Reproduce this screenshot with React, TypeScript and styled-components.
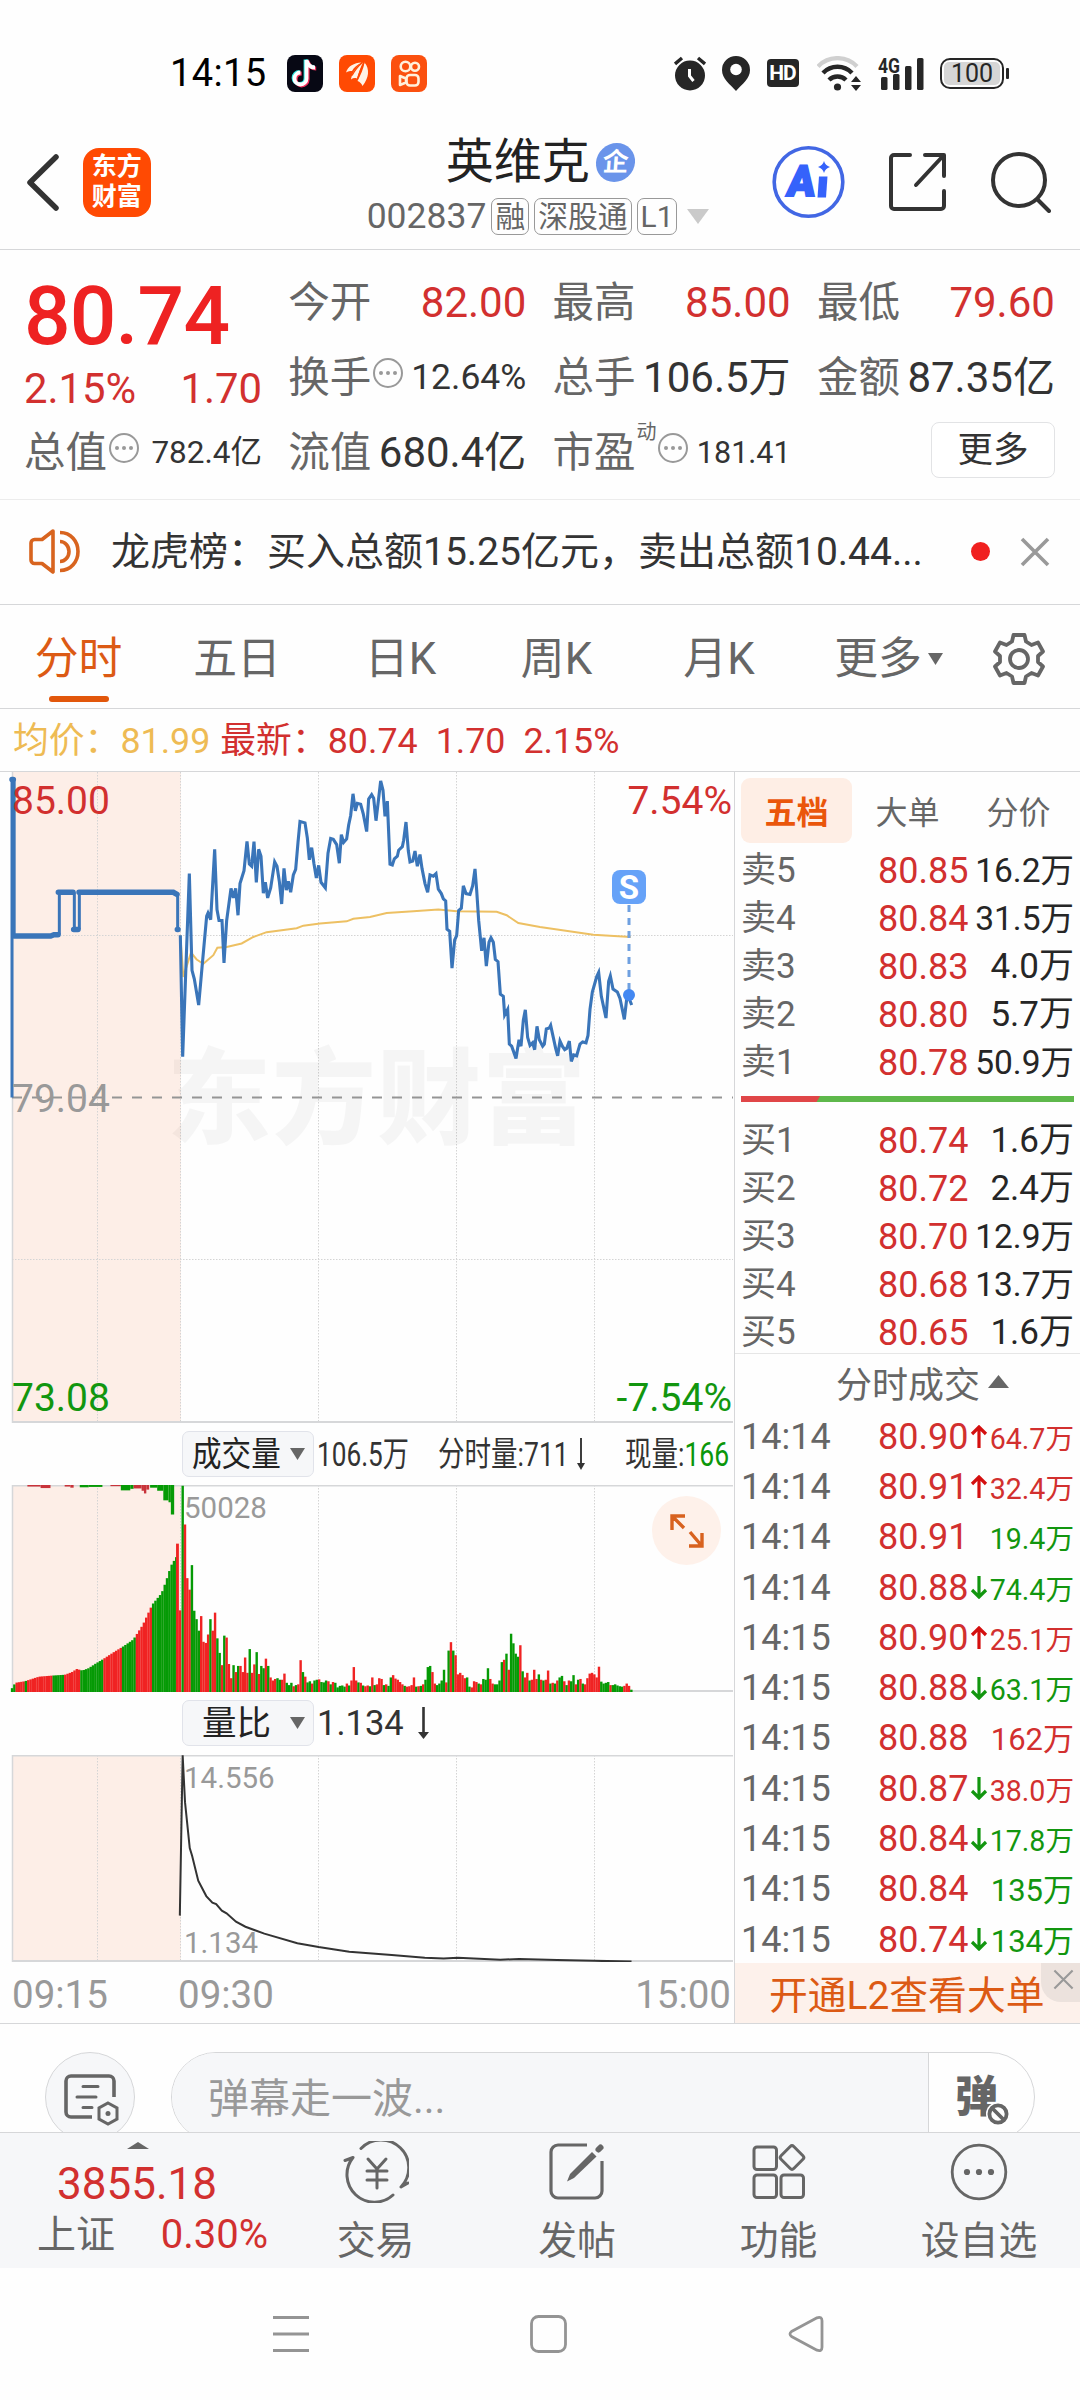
import React from "react";
import styled, { createGlobalStyle, css } from "styled-components";

const RED = "#d2302f";
const GREEN = "#12960f";
const GREY = "#666666";
const INK = "#333333";
const ORANGE = "#dc5a14";
const LINE = "#d6d7d9";
const PALE = "#f6f7f9";
const PINK = "#fdeee7";

const Global = createGlobalStyle`
  * { box-sizing: border-box; }
  html, body { margin: 0; padding: 0; background: #fff; }
  body { font-family: Roboto, "Noto Sans CJK SC", sans-serif; color: ${INK}; }
  svg { display: block; flex: none; }
`;

const Screen = styled.div`
  width: 1080px;
  height: 2400px;
  background: #fefefe;
  overflow: hidden;
  display: flex;
  flex-direction: column;
`;

/* ---------- status bar ---------- */

const StatusBar = styled.div`
  flex: none;
  height: 110px;
  padding: 36px 76px 0 170px;
  display: flex;
  align-items: center;
  justify-content: space-between;
`;

const StatusSide = styled.div<{ $gap: number }>`
  display: flex;
  align-items: center;
  gap: ${(p) => p.$gap}px;
`;

const Clock = styled.span`
  font-size: 38px;
  line-height: 44px;
  color: #000;
  width: 101px;
  letter-spacing: 0.4px;
`;

const HdBadge = styled.span`
  width: 32px;
  height: 28px;
  margin-right: 2px;
  border-radius: 4px;
  background: #262626;
  color: #fff;
  font-size: 21px;
  font-weight: 700;
  line-height: 29px;
  text-align: center;
  letter-spacing: -1px;
`;

const Battery = styled.span`
  position: relative;
  width: 64px;
  height: 31px;
  border: 2.5px solid #262626;
  border-radius: 10px;
  padding: 2px;

  &::after {
    content: "";
    position: absolute;
    right: -7px;
    top: 8px;
    width: 3px;
    height: 11px;
    border-radius: 1px;
    background: #262626;
  }
`;

const BatteryFill = styled.span`
  display: block;
  height: 100%;
  border-radius: 5px;
  background: #d6d6d6;
  color: #262626;
  font-size: 25px;
  line-height: 23px;
  text-align: center;
`;

/* ---------- header ---------- */

const Header = styled.header`
  flex: none;
  height: 140px;
  padding: 5px 29px 0 25px;
  border-bottom: 1.5px solid ${LINE};
  display: flex;
  align-items: center;
`;

const Brand = styled.div`
  width: 68px;
  height: 69px;
  margin-left: 23px;
  border-radius: 16px;
  background: #ff4a03;
  color: #fff;
  font-size: 25px;
  font-weight: 700;
  line-height: 30px;
  text-align: center;
  padding-top: 4px;
`;

const TitleBlock = styled.div`
  align-self: flex-start;
  width: 345px;
  margin: 20px 0 0 216px;
`;

const TitleRow = styled.div`
  display: flex;
  height: 54px;
  align-items: center;
  justify-content: center;
  gap: 6px;
  padding-left: 4px;
`;

const Title = styled.h1`
  margin: 0;
  font-size: 48px;
  font-weight: 400;
  line-height: 54px;
  color: #222;
`;

const FirmBadge = styled.span`
  width: 39px;
  height: 39px;
  border-radius: 50%;
  background: #6a94ea;
  color: #fff;
  font-size: 26px;
  font-weight: 700;
  line-height: 38px;
  text-align: center;
  transform: skewX(-4deg);
`;

const CodeRow = styled.div`
  display: flex;
  height: 44px;
  margin-top: 5px;
  align-items: center;
  gap: 5px;
`;

const Code = styled.span`
  font-size: 35.5px;
  line-height: 44px;
  color: ${GREY};
`;

const CodeTag = styled.span`
  height: 37px;
  padding: 0 3px;
  border: 1.5px solid #999;
  border-radius: 7px;
  font-size: 29.8px;
  line-height: 36px;
  color: ${GREY};
  white-space: nowrap;
`;

const HeaderIcons = styled.div`
  display: flex;
  align-items: center;
  margin-left: 62px;
  gap: 43px;
`;

/* ---------- quote ---------- */

const Quote = styled.section`
  flex: none;
  height: 250px;
  padding: 14.5px 25px 0 24px;
  border-bottom: 1.5px solid #ececec;
  display: grid;
  grid-template-columns: repeat(4, 238px);
  grid-template-rows: repeat(3, 75px);
  column-gap: 26.3px;
`;

const PriceCell = styled.div`
  grid-row: span 2;
  display: flex;
  flex-direction: column;
`;

const BigPrice = styled.span`
  height: 97px;
  padding-top: 2px;
  font-size: 82px;
  font-weight: 500;
  line-height: 98px;
  letter-spacing: -0.8px;
  color: #ee2222;
`;

const ChangeRow = styled.div`
  display: flex;
  justify-content: space-between;
  font-size: 41.8px;
  line-height: 54px;
  color: ${RED};
`;

const Cell = styled.div`
  display: flex;
  align-items: center;
  height: 75px;
  line-height: 75px;
  white-space: nowrap;
`;

const CellLabel = styled.span`
  font-size: 41.5px;
  color: ${GREY};
`;

const CellSup = styled.sup`
  font-size: 20px;
  line-height: 20px;
  color: ${GREY};
  align-self: flex-start;
  margin: 7px 0 0 1px;
`;

const CellValue = styled.span<{ $red?: boolean; $size?: number }>`
  margin-left: auto;
  font-size: ${(p) => p.$size ?? 42}px;
  color: ${(p) => (p.$red ? RED : INK)};
`;

const InfoDot = styled.span`
  width: 30px;
  height: 30px;
  margin: -9px 0 0 1.5px;
  border: 2.5px solid #999;
  border-radius: 50%;
  display: flex;
  align-items: center;
  justify-content: center;
  gap: 3px;

  i {
    width: 4px;
    height: 4px;
    border-radius: 50%;
    background: #999;
  }
`;

const MoreButton = styled.button`
  align-self: center;
  justify-self: end;
  width: 124px;
  height: 56px;
  margin-top: -5px;
  border: 1.5px solid #e2e3e5;
  border-radius: 8px;
  background: #fff;
  color: ${INK};
  font: 35.5px/54px Roboto, "Noto Sans CJK SC", sans-serif;
  padding: 0;
`;

/* ---------- news ---------- */

const News = styled.div`
  flex: none;
  height: 104.5px;
  border-bottom: 1.5px solid ${LINE};
  padding: 0 30px 0 29px;
  display: flex;
  align-items: center;
`;

const NewsText = styled.span`
  width: 830px;
  margin-left: 31px;
  font-size: 39px;
  line-height: 60px;
  white-space: nowrap;
`;

const RedDot = styled.span`
  width: 19px;
  height: 19px;
  margin: 0 30px 0 31px;
  border-radius: 50%;
  background: #f0201f;
`;

/* ---------- period tabs ---------- */

const Tabs = styled.nav`
  flex: none;
  height: 104px;
  padding-top: 4px;
  border-bottom: 1.5px solid ${LINE};
  display: grid;
  grid-template-columns: 157px 160px 167px 145px 180px 159px 102px;
`;

const Tab = styled.div<{ $active?: boolean }>`
  position: relative;
  display: flex;
  align-items: center;
  justify-content: center;
  gap: 6px;
  font-size: 43.8px;
  line-height: 101px;
  color: ${(p) => (p.$active ? ORANGE : GREY)};

  ${(p) =>
    p.$active &&
    css`
      &::after {
        content: "";
        position: absolute;
        left: 49px;
        bottom: 8px;
        width: 60px;
        height: 6px;
        border-radius: 3px;
        background: #e2570b;
      }
    `}
`;

const Averages = styled.div`
  flex: none;
  height: 63px;
  border-bottom: 1.5px solid ${LINE};
  padding: 1px 0 0 13px;
  display: flex;
  font-size: 35.8px;
  line-height: 63px;
  color: ${RED};
  white-space: nowrap;
`;

const AvgItem = styled.span<{ $gold?: boolean; $right: number }>`
  margin-right: ${(p) => p.$right}px;
  color: ${(p) => (p.$gold ? "#eebb54" : RED)};
`;

/* ---------- market body ---------- */

const Market = styled.main`
  flex: none;
  height: 1252px;
  border-bottom: 1.5px solid ${LINE};
  display: flex;
`;

const Charts = styled.section`
  width: 735px;
  border-right: 1.5px solid ${LINE};
`;

const Plot = styled.div<{ $h: number }>`
  position: relative;
  height: ${(p) => p.$h}px;
`;

const PlotLabel = styled.span<{
  $x?: number;
  $r?: number;
  $y: number;
  $color: string;
  $size: number;
}>`
  position: absolute;
  ${(p) => (p.$r !== undefined ? `right: ${p.$r}px;` : `left: ${p.$x}px;`)}
  top: ${(p) => p.$y - 20}px;
  font-size: ${(p) => p.$size}px;
  line-height: 40px;
  color: ${(p) => p.$color};
`;

const SellBadge = styled.span`
  position: absolute;
  left: 612px;
  top: 98px;
  width: 34px;
  height: 34px;
  border-radius: 8px;
  background: #66a2f8;
  color: #fff;
  font-size: 33px;
  font-weight: 700;
  line-height: 35px;
  text-align: center;
`;

const ExpandButton = styled.span`
  position: absolute;
  left: 652px;
  top: 11px;
  width: 69px;
  height: 69px;
  border-radius: 50%;
  background: #fef1ea;
  display: flex;
  align-items: center;
  justify-content: center;
`;

const Indicator = styled.div`
  height: 62.5px;
  padding-left: 182px;
  display: flex;
  align-items: center;
  font-size: 34px;
  line-height: 46px;
`;

const Select = styled.div`
  width: 132px;
  height: 46px;
  flex: none;
  padding-right: 8px;
  border: 1.5px solid #e1e3ea;
  border-radius: 7px;
  background: ${PALE};
  display: flex;
  align-items: center;
  justify-content: flex-end;
  color: #222;
`;

const Squeezed = styled.span<{ $w: number; $k: number; $ml?: number }>`
  width: ${(p) => p.$w}px;
  margin-left: ${(p) => p.$ml ?? 0}px;
  flex: none;
  white-space: nowrap;

  > span {
    display: inline-block;
    transform: scaleX(${(p) => p.$k});
    transform-origin: left center;
  }
  b {
    font-weight: 400;
    color: #0b970b;
  }
`;

const SelectName = styled.span`
  flex: none;
  width: 70px;
  margin-right: 18px;
  font-size: 34.5px;
  white-space: nowrap;
`;

const RatioValue = styled.span`
  margin: 0 14px 0 3px;
  font-size: 34.5px;
`;

const Axis = styled.div`
  height: 61px;
  padding: 4px 3px 0 12px;
  display: flex;
  font-size: 38.5px;
  line-height: 58px;
  color: #999;
`;

const AxisTime = styled.span<{ $w?: number }>`
  ${(p) => (p.$w ? `width: ${p.$w}px;` : "margin-left: auto;")}
`;

/* ---------- order book ---------- */

const Book = styled.aside`
  width: 345px;
  display: flex;
  flex-direction: column;
`;

const BookTabs = styled.div`
  height: 75px;
  flex: none;
  padding: 6.5px 0 0 6px;
  display: flex;
`;

const BookTab = styled.span<{ $active?: boolean }>`
  width: 111px;
  height: 65px;
  border-radius: 9px;
  text-align: center;
  font-size: 32px;
  line-height: 70px;
  color: ${(p) => (p.$active ? "#ea560b" : GREY)};
  font-weight: ${(p) => (p.$active ? 700 : 400)};
  background: ${(p) => (p.$active ? "#feeee5" : "transparent")};
`;

const OrderRow = styled.div`
  height: 48px;
  flex: none;
  padding: 0 6px 0 6px;
  display: grid;
  grid-template-columns: 137px 93px 1fr;
  line-height: 48px;
  font-size: 35px;
  color: ${GREY};
`;

const RowPrice = styled.span`
  font-size: 36px;
  color: ${RED};
`;

const OrderQty = styled.span<{ $long: boolean }>`
  justify-self: end;
  font-size: ${(p) => (p.$long ? 33.5 : 35)}px;
  color: #262626;
  white-space: nowrap;
`;

const RatioTrack = styled.div`
  flex: none;
  height: 6px;
  margin: 9px 6px 15px;
  background: linear-gradient(120deg, #e04648 0 68px, #5eb84b 69px);
`;

const TradesTitle = styled.div`
  flex: none;
  height: 59px;
  margin-top: -4px;
  border-top: 1.5px solid #e6e6e6;
  display: flex;
  align-items: center;
  justify-content: center;
  gap: 8px;
  padding: 0 4px 2px 34px;
  font-size: 36px;
  color: ${GREY};
`;

const TradeRow = styled.div`
  flex: none;
  height: 50.3px;
  padding: 0 6px 0 6px;
  display: grid;
  grid-template-columns: 137px 92px 18px minmax(0, 1fr);
  align-items: center;
  line-height: 50px;
  font-size: 36px;
  color: ${GREY};
  white-space: nowrap;
`;

const TradeQty = styled.span<{ $up: boolean; $long: boolean }>`
  justify-self: end;
  font-size: ${(p) => (p.$long ? 28.6 : 31)}px;
  line-height: 46px;
  color: ${(p) => (p.$up ? RED : GREEN)};
  padding-top: 4px;
`;

const Promo = styled.div`
  position: relative;
  flex: none;
  height: 60px;
  margin-top: -2px;
  background: #fdf1eb;
  color: ${ORANGE};
  font-size: 38.8px;
  line-height: 65px;
  padding-left: 34px;
  white-space: nowrap;
`;

const PromoClose = styled.span`
  position: absolute;
  right: 0;
  top: 0;
  width: 39px;
  height: 39px;
  border-bottom-left-radius: 20px;
  background: #ece2dd;
  padding: 6px 0 0 12px;
`;

/* ---------- bottom ---------- */

const Danmaku = styled.div`
  flex: none;
  height: 108px;
  padding: 28px 45px 0 45px;
  display: flex;
  overflow: hidden;
`;

const RoundButton = styled.span`
  flex: none;
  width: 90px;
  height: 90px;
  border: 1.5px solid ${LINE};
  border-radius: 50%;
  background: ${PALE};
  padding: 21px 0 0 18px;
`;

const InputPill = styled.div`
  flex: none;
  width: 864px;
  height: 90px;
  margin-left: 36px;
  border: 1.5px solid ${LINE};
  border-radius: 45px;
  display: flex;
  overflow: hidden;
`;

const InputText = styled.span`
  width: 757px;
  border-right: 1.5px solid ${LINE};
  background: ${PALE};
  padding-left: 36px;
  font-size: 41px;
  line-height: 92px;
  color: #999;
`;

const BulletToggle = styled.span`
  position: relative;
  padding-left: 26px;
  font-size: 43px;
  font-weight: 900;
  line-height: 88px;
  color: ${GREY};
`;

const BanMark = styled.span`
  position: absolute;
  left: 57px;
  top: 49px;
  border-radius: 50%;
  background: #fff;
`;

const Toolbar = styled.footer`
  flex: none;
  height: 136px;
  border-top: 1.5px solid ${LINE};
  background: ${PALE};
  display: grid;
  grid-template-columns: 275px 201px 202px 201px 200px;
`;

const IndexBox = styled.div`
  display: flex;
  flex-direction: column;
  color: ${RED};
  padding: 9px 0 0 37px;
`;

const IndexArrow = styled.span`
  width: 0;
  height: 0;
  margin-left: 90px;
  border: 11px solid transparent;
  border-bottom: 7px solid ${GREY};
  border-top: 0;
`;

const IndexValue = styled.span`
  margin: 9px 0 0 20px;
  font-size: 44px;
  line-height: 52px;
`;

const IndexChange = styled.span`
  display: flex;
  justify-content: space-between;
  width: 231px;
  font-size: 40px;
  line-height: 50px;

  em {
    font-style: normal;
    font-size: 39px;
    color: ${GREY};
  }
`;

const Tool = styled.div`
  display: flex;
  flex-direction: column;
  align-items: center;
  padding-top: 8px;
  font-size: 38.8px;
  line-height: 76px;
  color: ${GREY};
`;

const SystemNav = styled.div`
  flex: none;
  height: 132px;
  padding: 0 256px 0 273px;
  display: flex;
  align-items: center;
  justify-content: space-between;
`;

/* ---------- icons ---------- */

const NoteIcon = () => (
  <svg width="36" height="37" viewBox="0 0 36 37">
    <rect width="36" height="37" rx="8" fill="#070814" />
    <g fill="none" strokeWidth="3.8">
      <path d="M19.500 5v18.500a6 6 0 1 1-6-6M19.500 5c1 4.500 4 7.500 8.500 7.500" stroke="#2ee6e0" transform="translate(-1 -.6)" />
      <path d="M19.500 5v18.500a6 6 0 1 1-6-6M19.500 5c1 4.500 4 7.500 8.500 7.500" stroke="#f0305a" transform="translate(1.200 1)" />
      <path d="M19.500 5v18.500a6 6 0 1 1-6-6M19.500 5c1 4.500 4 7.500 8.500 7.500" stroke="#fff" />
    </g>
  </svg>
);

const WingIcon = () => (
  <svg width="36" height="37" viewBox="0 0 36 37">
    <rect width="36" height="37" rx="8" fill="#ff4a03" />
    <g fill="#fff3e6">
      <path d="M7 17.500C9 11 15 8 22.500 7.500c-5 2.500-7.500 5-9.500 8.500-2 0-4 .3-6 1.500z" />
      <path d="M12 24.500c1-7 5.500-13 12-17-2.500 5-4.500 10-6 16-2-.8-4-.5-6 1z" />
      <path d="M23.500 31c-1-2.500-2.500-4-5-5 3-6 6-12 7-18.500C31 14 30 23 23.500 31z" />
    </g>
    <path d="M23.500 7.500c-5 4-8 8.500-10.500 13M25 8c-3 5.500-5 11-6.500 16" stroke="#ff4a03" strokeWidth="1.300" fill="none" />
  </svg>
);

const CameraIcon = () => (
  <svg width="36" height="37" viewBox="0 0 36 37">
    <rect width="36" height="37" rx="8" fill="#fb500f" />
    <g fill="none" stroke="#fff0dc" strokeWidth="2.6">
      <circle cx="14.500" cy="11.500" r="4.800" />
      <circle cx="24" cy="11.800" r="4" />
      <rect x="15.500" y="20" width="12" height="10.500" rx="3.500" />
      <path d="M15 23.500l-6-2.500v9l6-2.500z" strokeLinejoin="round" />
    </g>
  </svg>
);

const AlarmIcon = () => (
  <svg width="32" height="35" viewBox="0 0 32 35">
    <circle cx="16" cy="19.500" r="15" fill="#262626" />
    <path d="M1 8l7-6M31 8l-7-6" stroke="#262626" strokeWidth="3.400" />
    <path d="M15.500 13v7l4 5" stroke="#fff" strokeWidth="3" fill="none" />
  </svg>
);

const PinIcon = () => (
  <svg width="28" height="35" viewBox="0 0 28 35">
    <path d="M14 0a14 14 0 0 0-14 14c0 9 8 14 14 21 6-7 14-12 14-21A14 14 0 0 0 14 0z" fill="#262626" />
    <circle cx="14" cy="13.500" r="5.800" fill="#fff" />
  </svg>
);

const WifiIcon = () => (
  <svg width="44" height="35" viewBox="0 0 44 35">
    <g fill="none" strokeWidth="4.400">
      <path d="M1 10.500a27 27 0 0 1 39 0" stroke="#d0d0d0" />
      <path d="M6 17a20 20 0 0 1 29 0M12 24a12 12 0 0 1 17 0" stroke="#262626" />
    </g>
    <circle cx="20.500" cy="31" r="3.600" fill="#262626" />
    <path d="M34 26l5-6 5 6zM34 29l5 6 5-6z" fill="#262626" />
  </svg>
);

const SignalIcon = () => (
  <svg width="46" height="36" viewBox="0 0 46 36">
    <text x="0" y="17.500" fontFamily="Roboto" fontWeight="700" fontSize="20" textLength="22" lengthAdjust="spacingAndGlyphs" fill="#262626">
      4G
    </text>
    <g fill="#262626">
      <rect x="3" y="22" width="6.500" height="13" rx="1.500" />
      <rect x="15" y="19" width="6.500" height="16" rx="1.500" />
      <rect x="27" y="11" width="6.500" height="24" rx="1.500" />
      <rect x="39" y="3" width="6.500" height="32" rx="1.500" />
    </g>
  </svg>
);

const BackIcon = () => (
  <svg width="35" height="60" viewBox="0 0 35 60">
    <path d="M31 5L5 30.500 31 56" fill="none" stroke="#333" strokeWidth="5.500" strokeLinecap="round" strokeLinejoin="round" />
  </svg>
);

const AiIcon = () => (
  <svg width="73" height="74" viewBox="0 0 73 74">
    <circle cx="36.500" cy="37" r="34.300" fill="#fff" stroke="#4267e4" strokeWidth="3.600" />
    <text x="14" y="51" fontFamily="Roboto" fontWeight="900" fontSize="43" fill="#3562fb" stroke="#3562fb" strokeWidth="2" textLength="28" lengthAdjust="spacingAndGlyphs" transform="translate(6 0) skewX(-7)">
      A
    </text>
    <path d="M47 31.500h8.500l-1.500 21h-8.500z" fill="#3562fb" />
    <path d="M52 16q1.200 4.500 6 6-4.800 1.500-6 6-1.200-4.500-6-6 4.800-1.500 6-6z" fill="#3562fb" />
  </svg>
);

const ShareIcon = () => (
  <svg width="60" height="60" viewBox="0 0 60 60" fill="none" stroke="#333" strokeWidth="4" strokeLinecap="round" strokeLinejoin="round">
    <path d="M22 3H6a3 3 0 0 0-3 3v48a3 3 0 0 0 3 3h47a3 3 0 0 0 3-3V39M37 3h19v21M55 4L28 33" />
  </svg>
);

const SearchIcon = () => (
  <svg width="60" height="62" viewBox="0 0 60 62" fill="none" stroke="#333" strokeWidth="4" strokeLinecap="round">
    <circle cx="28" cy="29" r="26" />
    <path d="M47 49l11 11" />
  </svg>
);

const HornIcon = () => (
  <svg width="51" height="45" viewBox="0 0 51 45" fill="none" stroke="#d8641f" strokeWidth="3.600" strokeLinejoin="round">
    <path d="M24 2L13 10.500H5.500a3.500 3.500 0 0 0-3.500 3.500v17a3.500 3.500 0 0 0 3.500 3.500H13L24 43z" />
    <path d="M31 3.500c11 0 18 9 18 19s-7 19-18 19M31 12.500c5 0 9 4.500 9 10s-4 10-9 10" />
  </svg>
);

const CrossIcon = ({ size, width }: { size: number; width: number }) => (
  <svg width={size} height={size} viewBox="0 0 30 30">
    <path d="M2 2l26 26M28 2L2 28" stroke="#999" strokeWidth={width} />
  </svg>
);

const GearIcon = () => (
  <svg width="54" height="54" viewBox="-27 -27 54 54" fill="none" stroke="#666" strokeWidth="3.800" strokeLinejoin="round">
    <path d="M-5.500-24H5.500L7-17.500 12.500-14 19-16.500 24-7.500 19-3V3L24 7.500 19 16.500 12.500 14 7 17.500 5.500 24H-5.500L-7 17.500-12.500 14-19 16.500-24 7.500-19 3V-3L-24-7.500-19-16.500-12.500-14-7-17.500z" />
    <circle r="9" />
  </svg>
);

const Caret = ({ w, h, up, color = GREY }: { w: number; h: number; up?: boolean; color?: string }) => (
  <svg width={w} height={h} viewBox="0 0 20 10" preserveAspectRatio="none">
    <path d={up ? "M0 10L10 0l10 10z" : "M0 0l10 10L20 0z"} fill={color} />
  </svg>
);

const ThinArrow = ({ w = 11 }: { w?: number }) => (
  <svg width={w} height="32" viewBox="0 0 11 32" preserveAspectRatio="none">
    <path d="M5.500 0v28" stroke="#333" strokeWidth="2.600" />
    <path d="M0 25h11l-5.500 7z" fill="#333" />
  </svg>
);

const TickArrow = ({ up }: { up: boolean }) => (
  <svg width="18" height="23" viewBox="0 0 18 23" fill="none" strokeWidth="3.200">
    {up ? (
      <path d="M9 23V3M2 9l7-7 7 7" stroke="#d40f0f" />
    ) : (
      <path d="M9 0v20M2 14l7 7 7-7" stroke={GREEN} />
    )}
  </svg>
);

const PanelIcon = () => (
  <svg width="56" height="54" viewBox="0 0 56 54" fill="none" stroke="#666" strokeWidth="3.600">
    <path d="M50 23V7a5 5 0 0 0-5-5H7a5 5 0 0 0-5 5v31a5 5 0 0 0 5 5h21" />
    <path d="M19 12.500h15M13 23h19M19 33.500h9" strokeLinecap="round" strokeWidth="3" />
    <path d="M44 29l9 5v11l-9 5-9-5V34z" strokeWidth="3" />
    <circle cx="44" cy="39.500" r="2.500" fill="#666" stroke="none" />
  </svg>
);

const TradeIcon = () => (
  <svg width="66" height="62" viewBox="0 0 66 62" fill="none" stroke="#666" strokeWidth="3" strokeLinecap="round" strokeLinejoin="round">
    <path d="M18 7.500A27.500 27.500 0 0 1 58 46l7-4" />
    <path d="M50 54A27.500 27.500 0 0 1 10 16.500L2 19.500" />
    <path d="M25 18l9 10 9-10M34 28v19M24 30h20M24 39h20" />
  </svg>
);

const PostIcon = () => (
  <svg width="56" height="62" viewBox="0 0 56 62" fill="none" stroke="#666" strokeWidth="3.200">
    <path d="M38 4H9a7 7 0 0 0-7 7v39a7 7 0 0 0 7 7h37a7 7 0 0 0 7-7V20" />
    <path d="M43 11l4.500 4.500L25 37l-7 3.500 3-7.500z" fill="#666" stroke="none" />
    <path d="M49.500 8.500l2-2" strokeWidth="6" strokeLinecap="round" />
  </svg>
);

const GridIcon = () => (
  <svg width="54" height="62" viewBox="0 0 54 62" fill="none" stroke="#666" strokeWidth="3">
    <rect x="2" y="6" width="22.500" height="22.500" rx="3" />
    <rect x="2" y="34" width="22.500" height="22.500" rx="3" />
    <rect x="29" y="34" width="22.500" height="22.500" rx="3" />
    <rect x="31" y="7.500" width="18" height="18" rx="2.500" transform="rotate(45 40 16.500)" />
  </svg>
);

const MoreIcon = () => (
  <svg width="58" height="62" viewBox="0 0 58 62">
    <circle cx="29" cy="31" r="26.800" fill="none" stroke="#666" strokeWidth="2.800" />
    <g fill="#666">
      <circle cx="17" cy="31" r="3.100" />
      <circle cx="29" cy="31" r="3.100" />
      <circle cx="41" cy="31" r="3.100" />
    </g>
  </svg>
);

/* ---------- chart data ---------- */

const INTRADAY: number[][] = [
  [541, 404], [548, 684], [568, 262], [576, 485], [583, 505], [596, 565], [607, 470], [620, 360], [624, 353],
  [632, 368], [644, 206], [651, 345], [657, 370], [666, 370], [672, 468], [680, 370], [693, 296], [700, 318],
  [707, 296], [714, 358], [720, 285], [732, 255], [741, 188], [748, 240], [755, 245], [762, 188], [769, 282],
  [776, 206], [783, 222], [790, 307], [796, 282], [803, 318], [812, 295], [824, 235], [831, 245], [838, 280],
  [845, 332], [852, 250], [859, 300], [865, 280], [872, 305], [880, 265], [887, 252], [894, 190], [900, 142],
  [915, 145], [922, 180], [928, 230], [935, 202], [942, 240], [949, 272], [956, 243], [963, 282], [976, 295],
  [984, 215], [992, 181], [1000, 183], [1010, 195], [1018, 238], [1024, 172], [1031, 190], [1040, 182],
  [1046, 150], [1052, 128], [1059, 78], [1066, 117], [1072, 100], [1082, 102], [1090, 125], [1100, 165],
  [1106, 90], [1115, 80], [1121, 88], [1128, 140], [1135, 95], [1142, 48], [1149, 70], [1155, 130], [1162, 95],
  [1170, 240], [1177, 242], [1183, 228], [1192, 222], [1196, 208], [1207, 200], [1211, 185], [1218, 143],
  [1225, 210], [1230, 235], [1238, 233], [1245, 210], [1252, 245], [1260, 218], [1266, 250], [1275, 285],
  [1283, 305], [1290, 265], [1300, 268], [1308, 262], [1315, 298], [1324, 308], [1330, 320], [1337, 325],
  [1341, 390], [1349, 395], [1356, 480], [1364, 415], [1370, 405], [1376, 347], [1384, 342], [1390, 290],
  [1398, 308], [1410, 310], [1418, 290], [1425, 251], [1430, 300], [1436, 370], [1445, 440], [1452, 410],
  [1459, 475], [1467, 420], [1473, 410], [1480, 420], [1486, 460], [1494, 465], [1501, 540], [1510, 545],
  [1514, 588], [1523, 575], [1528, 655], [1535, 660], [1548, 688], [1557, 645], [1563, 660], [1570, 600],
  [1576, 576], [1583, 640], [1590, 658], [1598, 652], [1604, 668], [1611, 614], [1618, 645], [1628, 660],
  [1633, 655], [1639, 620], [1648, 618], [1652, 612], [1660, 640], [1667, 665], [1673, 682], [1680, 648],
  [1687, 660], [1694, 668], [1700, 665], [1708, 648], [1714, 695], [1721, 680], [1730, 682], [1740, 655],
  [1748, 650], [1758, 652], [1764, 635], [1770, 575], [1777, 535], [1790, 500], [1796, 490], [1804, 545],
  [1818, 595], [1826, 510], [1831, 498], [1839, 528], [1852, 535], [1860, 550], [1873, 598], [1881, 545],
  [1890, 555], [1895, 565],
];

const AVERAGE: number[][] = [
  [541, 404], [550, 500], [573, 444], [590, 460], [610, 470], [640, 450], [652, 433], [680, 431], [725, 423],
  [760, 408], [800, 397], [890, 388], [910, 382], [960, 377], [1040, 372], [1060, 366], [1110, 362], [1160, 353],
  [1240, 349], [1315, 345], [1370, 349], [1490, 350], [1520, 358], [1555, 376], [1620, 385], [1780, 403], [1892, 408],
];

const RATIO: number[][] = [
  [381, 1296], [387, 878], [392, 1000], [402, 1120], [407, 1140], [420, 1205], [437, 1245], [450, 1262],
  [458, 1266], [470, 1283], [480, 1290], [500, 1312], [520, 1325], [560, 1343], [630, 1368], [675, 1378],
  [740, 1390], [830, 1399], [900, 1406], [940, 1408], [970, 1406], [1060, 1411], [1100, 1409], [1180, 1412],
  [1260, 1414], [1338, 1416],
];

/* Per-minute volume since the open; a trailing r/g is the bar colour. */
const VOLUME = `538g 437r 297r 267r 331g 212g 190g 160g 198r 131r 128r 150r 190g 160r 207r 140g 102g 70r 147g 142r
73r 36r 70g 52r 68g 68r 52r 90r 50r 112g 50r 72r 104g 47r 68g 62g 87r 68g 38r 30r 34r 36g 32g 32r 48r 24g 18g 24g 15r 18g
20r 83r 52g 40r 25g 28g 22r 30g 32g 33r 26g 25g 30g 28r 20g 26r 24g 12g 16g 17g 14g 22r 17g 30r 65r 30r 25g 24r 17g 15r
17r 15g 38r 18g 20r 36r 34r 18g 20r 16g 38g 44r 35r 32r 26r 20r 16g 14r 15r 18r 38r 14g 15r 16g 20r 32g 65g 68g 52r 22r
18g 22g 30g 58g 25r 108g 130r 108g 96r 46r 50r 44r 36r 38g 14g 12r 28r 26r 22g 20r 34g 32g 62g 34r 22r 20g 20g 30g 78g 84r
100g 58r 152g 127g 100g 92g 122r 54g 38r 50r 30g 32r 58r 34r 46g 32r 30g 32r 56r 22g 24r 22g 30r 38g 42g 28r 18g 30r 28g 44g
20r 32g 34r 22g 20r 36r 48r 50r 46r 38r 66r 27g 22g 24g 26g 18r 18g 20g 17g 15g 14g 16r 22r 16r 6g`
  .trim()
  .split(/\s+/)
  .map((v) => ({ h: parseInt(v, 10), up: v.endsWith("r") }));

/* Call-auction envelope: [x, bar height]. */
const AUCTION: number[][] = [
  [24, 12], [30, 24], [50, 28], [80, 40], [110, 43], [135, 45], [150, 52], [160, 60], [172, 56], [185, 62], [200, 74],
  [215, 85], [240, 105], [260, 120], [280, 137], [300, 175], [320, 228], [340, 258], [350, 292], [360, 330], [371, 352],
];

const AUCTION_UP: number[][] = [[29, 50], [57, 109], [135, 168], [217, 256], [283, 319]];

const HANGING: [number, number, number, boolean][] = [
  [58, 86, 4, true], [86, 107, 8, true], [137, 149, 4, true], [149, 156, 7, true], [169, 188, 6, false],
  [188, 217, 5, false], [234, 256, 3, true], [256, 276, 14, false], [276, 283, 10, false], [283, 300, 9, true],
  [300, 305, 15, true], [305, 310, 22, true], [310, 316, 12, true], [318, 333, 7, false], [333, 346, 15, false],
  [346, 357, 40, false], [357, 362, 45, false], [362, 369, 77, false],
];

const auctionBars = Array.from({ length: 72 }, (_, i) => {
  const x = 23 + i * 4.9;
  const next = AUCTION.findIndex((p) => p[0] >= x);
  const j = next === -1 ? AUCTION.length - 1 : Math.max(1, next);
  const [x0, h0] = AUCTION[j - 1];
  const [x1, h1] = AUCTION[j];
  const h = h0 + ((h1 - h0) * (x - x0)) / (x1 - x0);
  return { x, h: Math.max(10, h), up: AUCTION_UP.some(([a, b]) => x >= a && x < b) };
});

const toPath = (pts: number[][]) => pts.map(([x, y], i) => `${i ? "L" : "M"}${x} ${y}`).join("");

const UP_BAR = "#f02323";
const DOWN_BAR = "#059a05";
const GRID_X = [98, 181, 319, 457, 595];

const PlotFrame = ({ h }: { h: number }) => (
  <g>
    <rect x="12" y="0" width="169" height={h} fill={PINK} />
    {GRID_X.map((x) => (
      <path key={x} d={`M${x - 0.5} 0V${h}`} stroke="#d4d4d4" strokeDasharray="1.500 1.500" />
    ))}
    <path d={`M12.500 0V${h}`} stroke={LINE} strokeWidth="1.500" />
    <path d={`M12 ${h - 1}H733`} stroke={LINE} strokeWidth="2" />
  </g>
);

const PriceChart = () => (
  <svg width="733" height="651" viewBox="0 0 733 651">
    <PlotFrame h={651} />
    <g stroke="#d4d4d4" strokeDasharray="1.500 1.500">
      <path d="M12 163.500H733M12 487.500H733" />
    </g>
    <text x="167" y="364" fontFamily="Noto Sans CJK SC" fontWeight="900" fontSize="104" letterSpacing="1" fill="#00000009">
      东方财富
    </text>
    <path d="M12 325.500H733" stroke="#959595" strokeWidth="2" strokeDasharray="10 10" />
    <svg x="0" y="0" width="733" height="651" viewBox="0 27.700 2199 1501" preserveAspectRatio="none" fill="none" strokeLinejoin="miter">
      <path d={toPath(AVERAGE)} stroke="#edc063" strokeWidth="2" vectorEffect="non-scaling-stroke" />
      <g stroke="#3a75b9" strokeLinecap="round">
        <path d="M36 45V778M178 403V305M223 305V391M238 391V305M533 312V391" strokeWidth="3" vectorEffect="non-scaling-stroke" strokeLinecap="butt" />
        <path d="M41 50V402" strokeWidth="4" vectorEffect="non-scaling-stroke" />
        <path d="M36 45H40M42 406H152L162 403H174M175 305H219M221 391H234M237 305H520L531 310M532 391H534" strokeWidth="5.500" vectorEffect="non-scaling-stroke" />
      </g>
      <path d={toPath(INTRADAY)} stroke="#3a75b9" strokeWidth="3.100" vectorEffect="non-scaling-stroke" />
    </svg>
    <path d="M629 133V219" stroke="#6fa0e0" strokeWidth="3" strokeDasharray="7 6" />
    <circle cx="629" cy="223" r="6" fill="#4388f2" />
  </svg>
);

const VolumeChart = () => (
  <svg width="733" height="207" viewBox="0 0 733 207">
    <PlotFrame h={207} />
    <path d="M12 .75H733" stroke={LINE} strokeWidth="1.500" />
    <svg width="733" height="207" viewBox="0 171 1553 540" preserveAspectRatio="none">
      {auctionBars.map((b) => (
        <rect key={b.x} x={b.x} y={711 - b.h} width="5.200" height={b.h} fill={b.up ? UP_BAR : DOWN_BAR} />
      ))}
      <rect x="373" y="324" width="6" height="387" fill={UP_BAR} />
      <rect x="379" y="498" width="5" height="213" fill={UP_BAR} />
      {HANGING.map(([a, b, h, up]) => (
        <rect key={a} x={a} y="171" width={b - a} height={h} fill={up ? "#c8333a" : DOWN_BAR} />
      ))}
      {VOLUME.map((b, i) => (
        <rect key={i} x={384.5 + i * 4.9} y={711 - b.h} width="5.100" height={b.h} fill={b.up ? UP_BAR : DOWN_BAR} />
      ))}
    </svg>
  </svg>
);

const RatioChart = () => (
  <svg width="733" height="207" viewBox="0 0 733 207">
    <PlotFrame h={207} />
    <path d="M12 .75H733" stroke={LINE} strokeWidth="1.500" />
    <svg width="733" height="207" viewBox="0 877 1553 540" preserveAspectRatio="none">
      <path d={toPath(RATIO)} fill="none" stroke="#333" strokeWidth="2" vectorEffect="non-scaling-stroke" />
    </svg>
  </svg>
);

/* ---------- book data ---------- */

const SELLS = [
  ["卖5", "80.85", "16.2万"],
  ["卖4", "80.84", "31.5万"],
  ["卖3", "80.83", "4.0万"],
  ["卖2", "80.80", "5.7万"],
  ["卖1", "80.78", "50.9万"],
];

const BUYS = [
  ["买1", "80.74", "1.6万"],
  ["买2", "80.72", "2.4万"],
  ["买3", "80.70", "12.9万"],
  ["买4", "80.68", "13.7万"],
  ["买5", "80.65", "1.6万"],
];

const TRADES: [string, string, string, string, string][] = [
  ["14:14", "80.90", "up", "64.7万", "r"],
  ["14:14", "80.91", "up", "32.4万", "r"],
  ["14:14", "80.91", "", "19.4万", "g"],
  ["14:14", "80.88", "down", "74.4万", "g"],
  ["14:15", "80.90", "up", "25.1万", "r"],
  ["14:15", "80.88", "down", "63.1万", "g"],
  ["14:15", "80.88", "", "162万", "r"],
  ["14:15", "80.87", "down", "38.0万", "r"],
  ["14:15", "80.84", "down", "17.8万", "g"],
  ["14:15", "80.84", "", "135万", "g"],
  ["14:15", "80.74", "down", "134万", "g"],
];

const Orders = ({ rows }: { rows: string[][] }) => (
  <>
    {rows.map(([name, price, qty]) => (
      <OrderRow key={name}>
        <span>{name}</span>
        <RowPrice>{price}</RowPrice>
        <OrderQty $long={qty.length > 4}>{qty}</OrderQty>
      </OrderRow>
    ))}
  </>
);

const Info = () => (
  <InfoDot>
    <i />
    <i />
    <i />
  </InfoDot>
);

type FieldProps = { label: string; value: string; red?: boolean; size?: number; info?: boolean; sup?: string };

const Field = ({ label, value, red, size, info, sup }: FieldProps) => (
  <Cell>
    <CellLabel>{label}</CellLabel>
    {sup && <CellSup>{sup}</CellSup>}
    {info && <Info />}
    <CellValue $red={red} $size={size}>
      {value}
    </CellValue>
  </Cell>
);

export default function App() {
  return (
    <Screen>
      <Global />
      <StatusBar>
        <StatusSide $gap={16}>
          <Clock>14:15</Clock>
          <NoteIcon />
          <WingIcon />
          <CameraIcon />
        </StatusSide>
        <StatusSide $gap={16.5}>
          <AlarmIcon />
          <PinIcon />
          <HdBadge>HD</HdBadge>
          <WifiIcon />
          <SignalIcon />
          <Battery>
            <BatteryFill>100</BatteryFill>
          </Battery>
        </StatusSide>
      </StatusBar>

      <Header>
        <BackIcon />
        <Brand>
          东方
          <br />
          财富
        </Brand>
        <TitleBlock>
          <TitleRow>
            <Title>英维克</Title>
            <FirmBadge>企</FirmBadge>
          </TitleRow>
          <CodeRow>
            <Code>002837</Code>
            <CodeTag>融</CodeTag>
            <CodeTag>深股通</CodeTag>
            <CodeTag>L1</CodeTag>
            <span />
            <Caret w={22} h={15} color="#cacaca" />
          </CodeRow>
        </TitleBlock>
        <HeaderIcons>
          <AiIcon />
          <ShareIcon />
          <SearchIcon />
        </HeaderIcons>
      </Header>

      <Quote>
        <PriceCell>
          <BigPrice>80.74</BigPrice>
          <ChangeRow>
            <span>2.15%</span>
            <span>1.70</span>
          </ChangeRow>
        </PriceCell>
        <Field label="今开" value="82.00" red />
        <Field label="最高" value="85.00" red />
        <Field label="最低" value="79.60" red />
        <Field label="换手" value="12.64%" size={35.5} info />
        <Field label="总手" value="106.5万" />
        <Field label="金额" value="87.35亿" />
        <Field label="总值" value="782.4亿" size={31.5} info />
        <Field label="流值" value="680.4亿" />
        <Field label="市盈" value="181.41" size={30.5} sup="动" info />
        <MoreButton>更多</MoreButton>
      </Quote>

      <News>
        <HornIcon />
        <NewsText>龙虎榜：买入总额15.25亿元，卖出总额10.44...</NewsText>
        <RedDot />
        <CrossIcon size={30} width={3.6} />
      </News>

      <Tabs>
        <Tab $active>分时</Tab>
        <Tab>五日</Tab>
        <Tab>日K</Tab>
        <Tab>周K</Tab>
        <Tab>月K</Tab>
        <Tab>
          更多
          <Caret w={15} h={12} />
        </Tab>
        <Tab>
          <GearIcon />
        </Tab>
      </Tabs>

      <Averages>
        <AvgItem $gold $right={10}>
          均价：81.99
        </AvgItem>
        <AvgItem $right={18}>最新：80.74</AvgItem>
        <AvgItem $right={18}>1.70</AvgItem>
        <AvgItem $right={0}>2.15%</AvgItem>
      </Averages>

      <Market>
        <Charts>
          <Plot $h={651}>
            <PriceChart />
            <PlotLabel $x={12} $y={29} $size={39} $color={RED}>85.00</PlotLabel>
            <PlotLabel $x={12} $y={327} $size={39} $color="#999">79.04</PlotLabel>
            <PlotLabel $x={12} $y={626} $size={39} $color={GREEN}>73.08</PlotLabel>
            <PlotLabel $r={2} $y={29} $size={39} $color={RED}>7.54%</PlotLabel>
            <PlotLabel $r={2} $y={626} $size={39} $color={GREEN}>-7.54%</PlotLabel>
            <SellBadge>S</SellBadge>
          </Plot>

          <Indicator>
            <Select>
              <Squeezed $w={98} $k={0.87}>
                <span>成交量</span>
              </Squeezed>
              <Caret w={15} h={12} />
            </Select>
            <Squeezed $w={121} $k={0.77} $ml={3}>
              <span>106.5万</span>
            </Squeezed>
            <Squeezed $w={139} $k={0.78}>
              <span>分时量:711</span>
            </Squeezed>
            <ThinArrow w={8} />
            <Squeezed $w={106} $k={0.78} $ml={40}>
              <span>
                现量:<b>166</b>
              </span>
            </Squeezed>
          </Indicator>
          <Plot $h={207}>
            <VolumeChart />
            <PlotLabel $x={184} $y={23} $size={29.5} $color="#999">50028</PlotLabel>
            <ExpandButton>
              <svg width="36" height="36" viewBox="0 0 36 36" fill="none" stroke="#d8621f" strokeWidth="3.400">
                <path d="M3 17V3h13M4 4l11 11M33 20v13H20M32 32L21 19" />
              </svg>
            </ExpandButton>
          </Plot>

          <Indicator>
            <Select>
              <SelectName>量比</SelectName>
              <Caret w={15} h={12} />
            </Select>
            <RatioValue>1.134</RatioValue>
            <ThinArrow />
          </Indicator>
          <Plot $h={207}>
            <RatioChart />
            <PlotLabel $x={184} $y={23} $size={29.5} $color="#999">14.556</PlotLabel>
            <PlotLabel $x={184} $y={188} $size={29.5} $color="#999">1.134</PlotLabel>
          </Plot>
          <Axis>
            <AxisTime $w={166}>09:15</AxisTime>
            <AxisTime $w={120}>09:30</AxisTime>
            <AxisTime>15:00</AxisTime>
          </Axis>
        </Charts>

        <Book>
          <BookTabs>
            <BookTab $active>五档</BookTab>
            <BookTab>大单</BookTab>
            <BookTab>分价</BookTab>
          </BookTabs>
          <Orders rows={SELLS} />
          <RatioTrack />
          <Orders rows={BUYS} />
          <TradesTitle>
            分时成交
            <Caret w={21} h={13} up />
          </TradesTitle>
          {TRADES.map(([time, price, dir, qty, tone], i) => (
            <TradeRow key={i}>
              <span>{time}</span>
              <RowPrice>{price}</RowPrice>
              {dir ? <TickArrow up={dir === "up"} /> : <span />}
              <TradeQty $up={tone === "r"} $long={qty.length > 4}>
                {qty}
              </TradeQty>
            </TradeRow>
          ))}
          <Promo>
            开通L2查看大单
            <PromoClose>
              <CrossIcon size={21} width={3} />
            </PromoClose>
          </Promo>
        </Book>
      </Market>

      <Danmaku>
        <RoundButton>
          <PanelIcon />
        </RoundButton>
        <InputPill>
          <InputText>弹幕走一波...</InputText>
          <BulletToggle>
            弹
            <BanMark>
              <svg width="24" height="24" viewBox="0 0 24 24" fill="none" stroke="#666" strokeWidth="3.800">
                <circle cx="12" cy="12" r="8.600" />
                <path d="M6 6l12 12" />
              </svg>
            </BanMark>
          </BulletToggle>
        </InputPill>
      </Danmaku>

      <Toolbar>
        <IndexBox>
          <IndexArrow />
          <IndexValue>3855.18</IndexValue>
          <IndexChange>
            <em>上证</em>0.30%
          </IndexChange>
        </IndexBox>
        <Tool>
          <TradeIcon />
          交易
        </Tool>
        <Tool>
          <PostIcon />
          发帖
        </Tool>
        <Tool>
          <GridIcon />
          功能
        </Tool>
        <Tool>
          <MoreIcon />
          设自选
        </Tool>
      </Toolbar>

      <SystemNav>
        <svg width="36" height="38" viewBox="0 0 36 38">
          <path d="M0 2.500h36M0 19h36M0 35.500h36" stroke="#949494" strokeWidth="3" />
        </svg>
        <svg width="37" height="38" viewBox="0 0 37 38">
          <rect x="1.500" y="1.500" width="34" height="35" rx="7" fill="none" stroke="#949494" strokeWidth="2.800" />
        </svg>
        <svg width="36" height="38" viewBox="0 0 36 38">
          <path d="M29 2.800L3.500 16.500q-3 2.500 0 5L29 35.200q5 1.500 5-3V5.800q0-4.500-5-3z" fill="none" stroke="#949494" strokeWidth="2.800" strokeLinejoin="round" />
        </svg>
      </SystemNav>
    </Screen>
  );
}
